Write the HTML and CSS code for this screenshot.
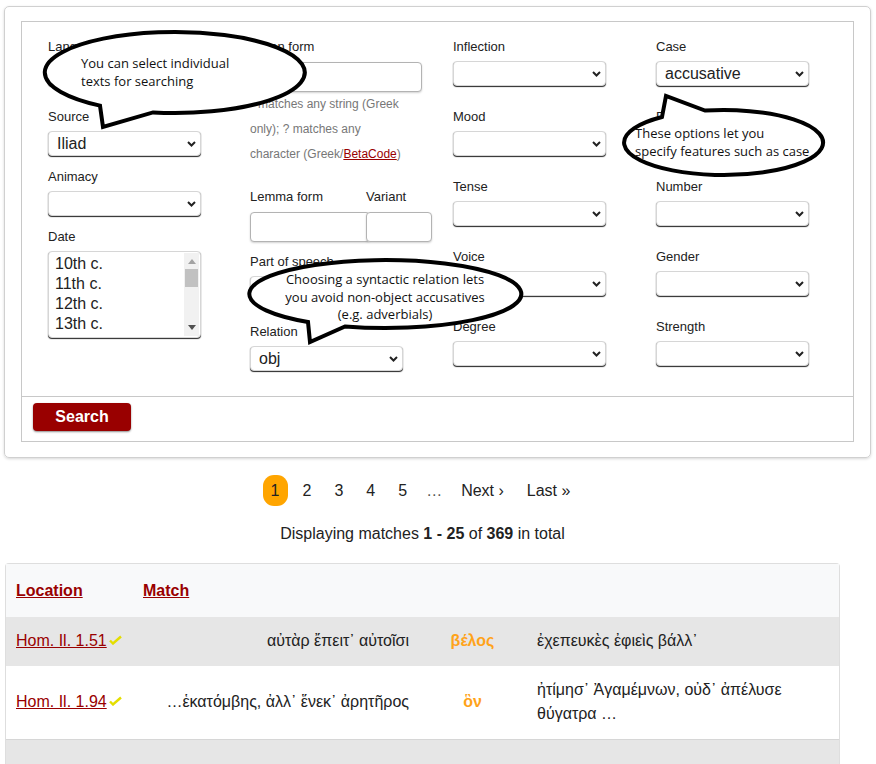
FILE: index.html
```html
<!DOCTYPE html>
<html lang="en">
<head>
<meta charset="utf-8">
<title>Search</title>
<link rel="stylesheet" href="styles.css">
</head>
<body>
<div class="page">
  <div class="card">
    <div class="panel">
      <div class="form-grid">
        <div class="col">
          <div class="field gap-lg">
            <span class="lbl">Language</span>
            <div class="select"><span class="val"></span><svg class="chev" width="9" height="6" viewBox="0 0 9 6"><path d="M1 1l3.5 3.5L8 1" fill="none" stroke="#222" stroke-width="2"/></svg></div>
          </div>
          <div class="field gap-sm">
            <span class="lbl">Source</span>
            <div class="select"><span class="val">Iliad</span><svg class="chev" width="9" height="6" viewBox="0 0 9 6"><path d="M1 1l3.5 3.5L8 1" fill="none" stroke="#222" stroke-width="2"/></svg></div>
          </div>
          <div class="field gap-sm">
            <span class="lbl">Animacy</span>
            <div class="select"><span class="val"></span><svg class="chev" width="9" height="6" viewBox="0 0 9 6"><path d="M1 1l3.5 3.5L8 1" fill="none" stroke="#222" stroke-width="2"/></svg></div>
          </div>
          <div class="field">
            <span class="lbl">Date</span>
            <div class="listbox">
              <div class="options">
                <div>10th c.</div>
                <div>11th c.</div>
                <div>12th c.</div>
                <div>13th c.</div>
                <div>14th c.</div>
              </div>
              <div class="scrollbar">
                <span class="arrow up"></span>
                <span class="thumb"></span>
                <span class="track"></span>
                <span class="arrow down"></span>
              </div>
            </div>
          </div>
        </div>

        <div class="col">
          <div class="field">
            <span class="lbl lbl-in">Token form</span>
            <input class="text token-in" type="text">
            <p class="hint">* matches any string (Greek only); ? matches any character (Greek/<a href="#">BetaCode</a>)</p>
          </div>
          <div class="pair">
            <div class="field lemma">
              <span class="lbl lbl-in">Lemma form</span>
              <input class="text lemma-in" type="text">
            </div>
            <div class="field variant">
              <span class="lbl lbl-in">Variant</span>
              <input class="text variant-in" type="text">
            </div>
          </div>
          <div class="field gap-lg">
            <span class="lbl">Part of speech</span>
            <div class="select"><span class="val"></span><svg class="chev" width="9" height="6" viewBox="0 0 9 6"><path d="M1 1l3.5 3.5L8 1" fill="none" stroke="#222" stroke-width="2"/></svg></div>
          </div>
          <div class="field">
            <span class="lbl">Relation</span>
            <div class="select"><span class="val">obj</span><svg class="chev" width="9" height="6" viewBox="0 0 9 6"><path d="M1 1l3.5 3.5L8 1" fill="none" stroke="#222" stroke-width="2"/></svg></div>
          </div>
        </div>

        <div class="col">
          <div class="field gap-lg">
            <span class="lbl">Inflection</span>
            <div class="select"><span class="val"></span><svg class="chev" width="9" height="6" viewBox="0 0 9 6"><path d="M1 1l3.5 3.5L8 1" fill="none" stroke="#222" stroke-width="2"/></svg></div>
          </div>
          <div class="field gap-lg">
            <span class="lbl">Mood</span>
            <div class="select"><span class="val"></span><svg class="chev" width="9" height="6" viewBox="0 0 9 6"><path d="M1 1l3.5 3.5L8 1" fill="none" stroke="#222" stroke-width="2"/></svg></div>
          </div>
          <div class="field gap-lg">
            <span class="lbl">Tense</span>
            <div class="select"><span class="val"></span><svg class="chev" width="9" height="6" viewBox="0 0 9 6"><path d="M1 1l3.5 3.5L8 1" fill="none" stroke="#222" stroke-width="2"/></svg></div>
          </div>
          <div class="field gap-lg">
            <span class="lbl">Voice</span>
            <div class="select"><span class="val"></span><svg class="chev" width="9" height="6" viewBox="0 0 9 6"><path d="M1 1l3.5 3.5L8 1" fill="none" stroke="#222" stroke-width="2"/></svg></div>
          </div>
          <div class="field">
            <span class="lbl">Degree</span>
            <div class="select"><span class="val"></span><svg class="chev" width="9" height="6" viewBox="0 0 9 6"><path d="M1 1l3.5 3.5L8 1" fill="none" stroke="#222" stroke-width="2"/></svg></div>
          </div>
        </div>

        <div class="col">
          <div class="field gap-lg">
            <span class="lbl">Case</span>
            <div class="select"><span class="val">accusative</span><svg class="chev" width="9" height="6" viewBox="0 0 9 6"><path d="M1 1l3.5 3.5L8 1" fill="none" stroke="#222" stroke-width="2"/></svg></div>
          </div>
          <div class="field gap-lg">
            <span class="lbl">Person</span>
            <div class="select"><span class="val"></span><svg class="chev" width="9" height="6" viewBox="0 0 9 6"><path d="M1 1l3.5 3.5L8 1" fill="none" stroke="#222" stroke-width="2"/></svg></div>
          </div>
          <div class="field gap-lg">
            <span class="lbl">Number</span>
            <div class="select"><span class="val"></span><svg class="chev" width="9" height="6" viewBox="0 0 9 6"><path d="M1 1l3.5 3.5L8 1" fill="none" stroke="#222" stroke-width="2"/></svg></div>
          </div>
          <div class="field gap-lg">
            <span class="lbl">Gender</span>
            <div class="select"><span class="val"></span><svg class="chev" width="9" height="6" viewBox="0 0 9 6"><path d="M1 1l3.5 3.5L8 1" fill="none" stroke="#222" stroke-width="2"/></svg></div>
          </div>
          <div class="field">
            <span class="lbl">Strength</span>
            <div class="select"><span class="val"></span><svg class="chev" width="9" height="6" viewBox="0 0 9 6"><path d="M1 1l3.5 3.5L8 1" fill="none" stroke="#222" stroke-width="2"/></svg></div>
          </div>
        </div>
      </div>
      <div class="actions">
        <button class="btn-search" type="button">Search</button>
      </div>
    </div>
  </div>

  <div class="results">
    <nav class="pager">
      <span class="pg current">1</span>
      <span class="pg">2</span>
      <span class="pg">3</span>
      <span class="pg">4</span>
      <span class="pg">5</span>
      <span class="pg gap">…</span>
      <span class="pg">Next ›</span>
      <span class="pg">Last »</span>
    </nav>
    <p class="summary">Displaying matches <b>1&nbsp;-&nbsp;25</b> of <b>369</b> in total</p>

    <table class="matches">
      <colgroup>
        <col class="c-loc"><col class="c-left"><col class="c-hit"><col class="c-right">
      </colgroup>
      <thead>
        <tr>
          <th><a href="#">Location</a></th>
          <th colspan="3"><a href="#">Match</a></th>
        </tr>
      </thead>
      <tbody>
        <tr class="odd">
          <td class="loc"><a href="#">Hom. Il. 1.51</a><svg class="tick" width="13" height="10" viewBox="0 0 13 10"><path d="M1 5.5l3 3L12 1.5" fill="none" stroke="#e4de00" stroke-width="2.4"/></svg></td>
          <td class="left">αὐτὰρ ἔπειτ᾽ αὐτοῖσι</td>
          <td class="hit">βέλος</td>
          <td class="right">ἐχεπευκὲς ἐφιεὶς βάλλ᾽</td>
        </tr>
        <tr class="even">
          <td class="loc"><a href="#">Hom. Il. 1.94</a><svg class="tick" width="13" height="10" viewBox="0 0 13 10"><path d="M1 5.5l3 3L12 1.5" fill="none" stroke="#e4de00" stroke-width="2.4"/></svg></td>
          <td class="left">…ἑκατόμβης, ἀλλ᾽ ἕνεκ᾽ ἀρητῆρος</td>
          <td class="hit">ὃν</td>
          <td class="right">ἠτίμησ᾽ Ἀγαμέμνων, οὐδ᾽ ἀπέλυσε θύγατρα …</td>
        </tr>
        <tr class="odd last">
          <td class="loc">&nbsp;</td>
          <td class="left">&nbsp;</td>
          <td class="hit">&nbsp;</td>
          <td class="right">&nbsp;</td>
        </tr>
      </tbody>
    </table>
  </div>

  <div class="notes">
    <svg class="notes-svg" width="876" height="460" viewBox="0 0 876 460">
      <path d="M153 112.4 A130 40.5 0 1 0 100 105.6 L103 127 Z" fill="#fff" stroke="#000" stroke-width="4" stroke-linejoin="miter"/>
      <path d="M662 117 L666 96 L705 110.6 A99.5 32.5 0 1 1 662 117 Z" fill="#fff" stroke="#000" stroke-width="4" stroke-linejoin="miter"/>
      <path d="M345 326.5 A136 34 0 1 0 308 322 L310 342 Z" fill="#fff" stroke="#000" stroke-width="4" stroke-linejoin="miter"/>
    </svg>
    <div class="note note-1">You can select individual<br>texts for searching</div>
    <div class="note note-2">These options let you<br>specify features such as case</div>
    <div class="note note-3">Choosing a syntactic relation lets<br>you avoid non-object accusatives<br>(e.g. adverbials)</div>
  </div>
</div>
</body>
</html>
```

FILE: styles.css
```css
* { box-sizing: border-box; }

html, body {
  margin: 0;
  padding: 0;
  background: #fff;
}

body {
  font-family: "Liberation Sans", Arial, sans-serif;
  color: #222;
}

.page {
  position: relative;
  width: 876px;
  height: 764px;
  overflow: hidden;
  padding: 6px 5px 0 4px;
}

/* ---------- search card ---------- */
.card {
  width: 867px;
  border: 1px solid #d0d0d0;
  border-radius: 5px;
  box-shadow: 0 1px 3px rgba(0, 0, 0, 0.16);
  padding: 14px 16px 15px 16px;
}

.panel {
  border: 1px solid #c8c8c8;
}

.form-grid {
  display: grid;
  grid-template-columns: 202px 203px 203px 203px;
  align-items: start;
  padding: 17px 0 25px 26px;
}

.col {
  display: flex;
  flex-direction: column;
}

.field {
  display: flex;
  flex-direction: column;
  align-items: flex-start;
}

.gap-lg { margin-bottom: 23px; }
.gap-sm { margin-bottom: 13px; }

.lbl {
  font-size: 13px;
  line-height: 15px;
  height: 15px;
  margin-bottom: 7px;
  white-space: nowrap;
  color: #222;
}

.lbl-in { margin-bottom: 8px; }

.select {
  width: 153px;
  height: 25px;
  display: flex;
  align-items: center;
  justify-content: space-between;
  padding: 0 4px 0 8px;
  border: 1px solid #d6d6d6;
  border-radius: 4px;
  background: #fff;
  box-shadow: 0 1px 1px rgba(0, 0, 0, 0.85);
  font-size: 16px;
  color: #222;
}

.select .val {
  white-space: nowrap;
}

.chev {
  display: block;
  flex: none;
}

/* listbox */
.listbox {
  width: 153px;
  height: 87px;
  display: flex;
  border: 1px solid #d6d6d6;
  border-radius: 4px;
  box-shadow: 0 1px 1px rgba(0, 0, 0, 0.85);
  background: #fff;
  overflow: hidden;
  padding: 1px 1px 1px 0;
}

.options {
  flex: 1;
  padding: 1px 0 0 6px;
  font-size: 16px;
  line-height: 20px;
  color: #222;
  overflow: hidden;
}

.scrollbar {
  width: 15px;
  display: flex;
  flex-direction: column;
  align-items: center;
  background: #f1f1f1;
}

.arrow {
  width: 0;
  height: 0;
  border-left: 4px solid transparent;
  border-right: 4px solid transparent;
  margin: 6px 0 5px;
}

.arrow.up { border-bottom: 5px solid #a3a3a3; }
.arrow.down { border-top: 5px solid #505050; margin: 5px 0 6px; }

.thumb {
  width: 13px;
  height: 18px;
  background: #c1c1c1;
}

.track { flex: 1; }

/* text inputs */
.text {
  display: block;
  height: 30px;
  margin: 0;
  padding: 0 6px;
  border: 1px solid #b3b3b3;
  border-radius: 4px;
  background: #fff;
  box-shadow: 0 1px 2px rgba(0, 0, 0, 0.18);
  font-family: "Liberation Sans", Arial, sans-serif;
  font-size: 16px;
}

.token-in { width: 172px; }
.lemma-in { width: 120px; }
.variant-in { width: 66px; }

.hint {
  width: 160px;
  margin: 0 0 22px;
  font-size: 12px;
  line-height: 25px;
  color: #777;
}

.hint a {
  color: #990000;
  text-decoration: underline;
}

.pair {
  display: flex;
  margin-bottom: 12px;
}

.lemma { width: 116px; }

/* search row */
.actions {
  border-top: 1px solid #c8c8c8;
  padding: 6px 11px 10px;
}

.btn-search {
  display: block;
  width: 98px;
  height: 28px;
  border: 0;
  border-radius: 4px;
  background: #990000;
  box-shadow: 0 1px 2px rgba(0, 0, 0, 0.45);
  color: #fff;
  font-family: "Liberation Sans", Arial, sans-serif;
  font-weight: bold;
  font-size: 16px;
  padding: 0;
}

/* ---------- results ---------- */
.results {
  width: 835px;
  margin: 17px 0 0 1px;
}

.pager {
  display: flex;
  justify-content: center;
  gap: 7px;
  height: 31px;
  padding-right: 4px;
}

.pg {
  padding: 0 8px;
  font-size: 16px;
  line-height: 31px;
  color: #222;
  white-space: nowrap;
}

.pg.gap { padding: 0 4px; color: #555; }

.pg.current {
  background: #ffa500;
  border-radius: 11px;
}

.summary {
  margin: 18px 0 0;
  text-align: center;
  font-size: 16px;
  line-height: 20px;
  color: #222;
}

.matches {
  margin-top: 19px;
  width: 835px;
  table-layout: fixed;
  border-collapse: separate;
  border-spacing: 0;
  border: 1px solid #dedede;
  border-bottom: 0;
  border-radius: 4px 4px 0 0;
  font-size: 16px;
  color: #222;
}

.c-loc { width: 126px; }
.c-left { width: 288px; }
.c-hit { width: 105px; }
.c-right { width: 314px; }

.matches thead th {
  background: #f8f9fa;
  text-align: left;
  font-weight: bold;
  line-height: 24px;
  padding: 15px 11px 14px;
}

.matches thead th:first-child { padding-left: 10px; }

.matches thead a {
  color: #990000;
  text-decoration: underline;
}

.matches td {
  line-height: 24px;
  padding: 12px 11px 13px;
  vertical-align: middle;
}

.matches tr.odd td { background: #e6e6e6; }
.matches tr.even td { background: #fff; }
.matches tr.last td { border-top: 1px solid #d6d6d6; height: 60px; }

.matches td.loc {
  padding-left: 10px;
  padding-right: 0;
  white-space: nowrap;
}

.matches td.loc a {
  color: #990000;
  text-decoration: underline;
}

.tick {
  display: inline-block;
  vertical-align: 1px;
  margin-left: 2px;
}

.matches td.left { text-align: right; }

.matches td.hit {
  text-align: center;
  font-weight: bold;
  color: #ffa31a;
}

.matches td.right { padding-left: 12px; }

/* ---------- annotation bubbles ---------- */
.notes {
  position: absolute;
  left: 0;
  top: 0;
  width: 876px;
  height: 460px;
  pointer-events: none;
}

.notes-svg {
  position: absolute;
  left: 0;
  top: 0;
}

.note {
  position: absolute;
  font-family: "Open Sans", "Noto Sans", sans-serif;
  font-size: 13px;
  line-height: 18px;
  color: #111;
  white-space: nowrap;
}

.note-1 { left: 81px; top: 54px; }
.note-2 { left: 635px; top: 124px; }
.note-3 {
  left: 255px;
  top: 271px;
  width: 260px;
  text-align: center;
  line-height: 17.5px;
}
```
